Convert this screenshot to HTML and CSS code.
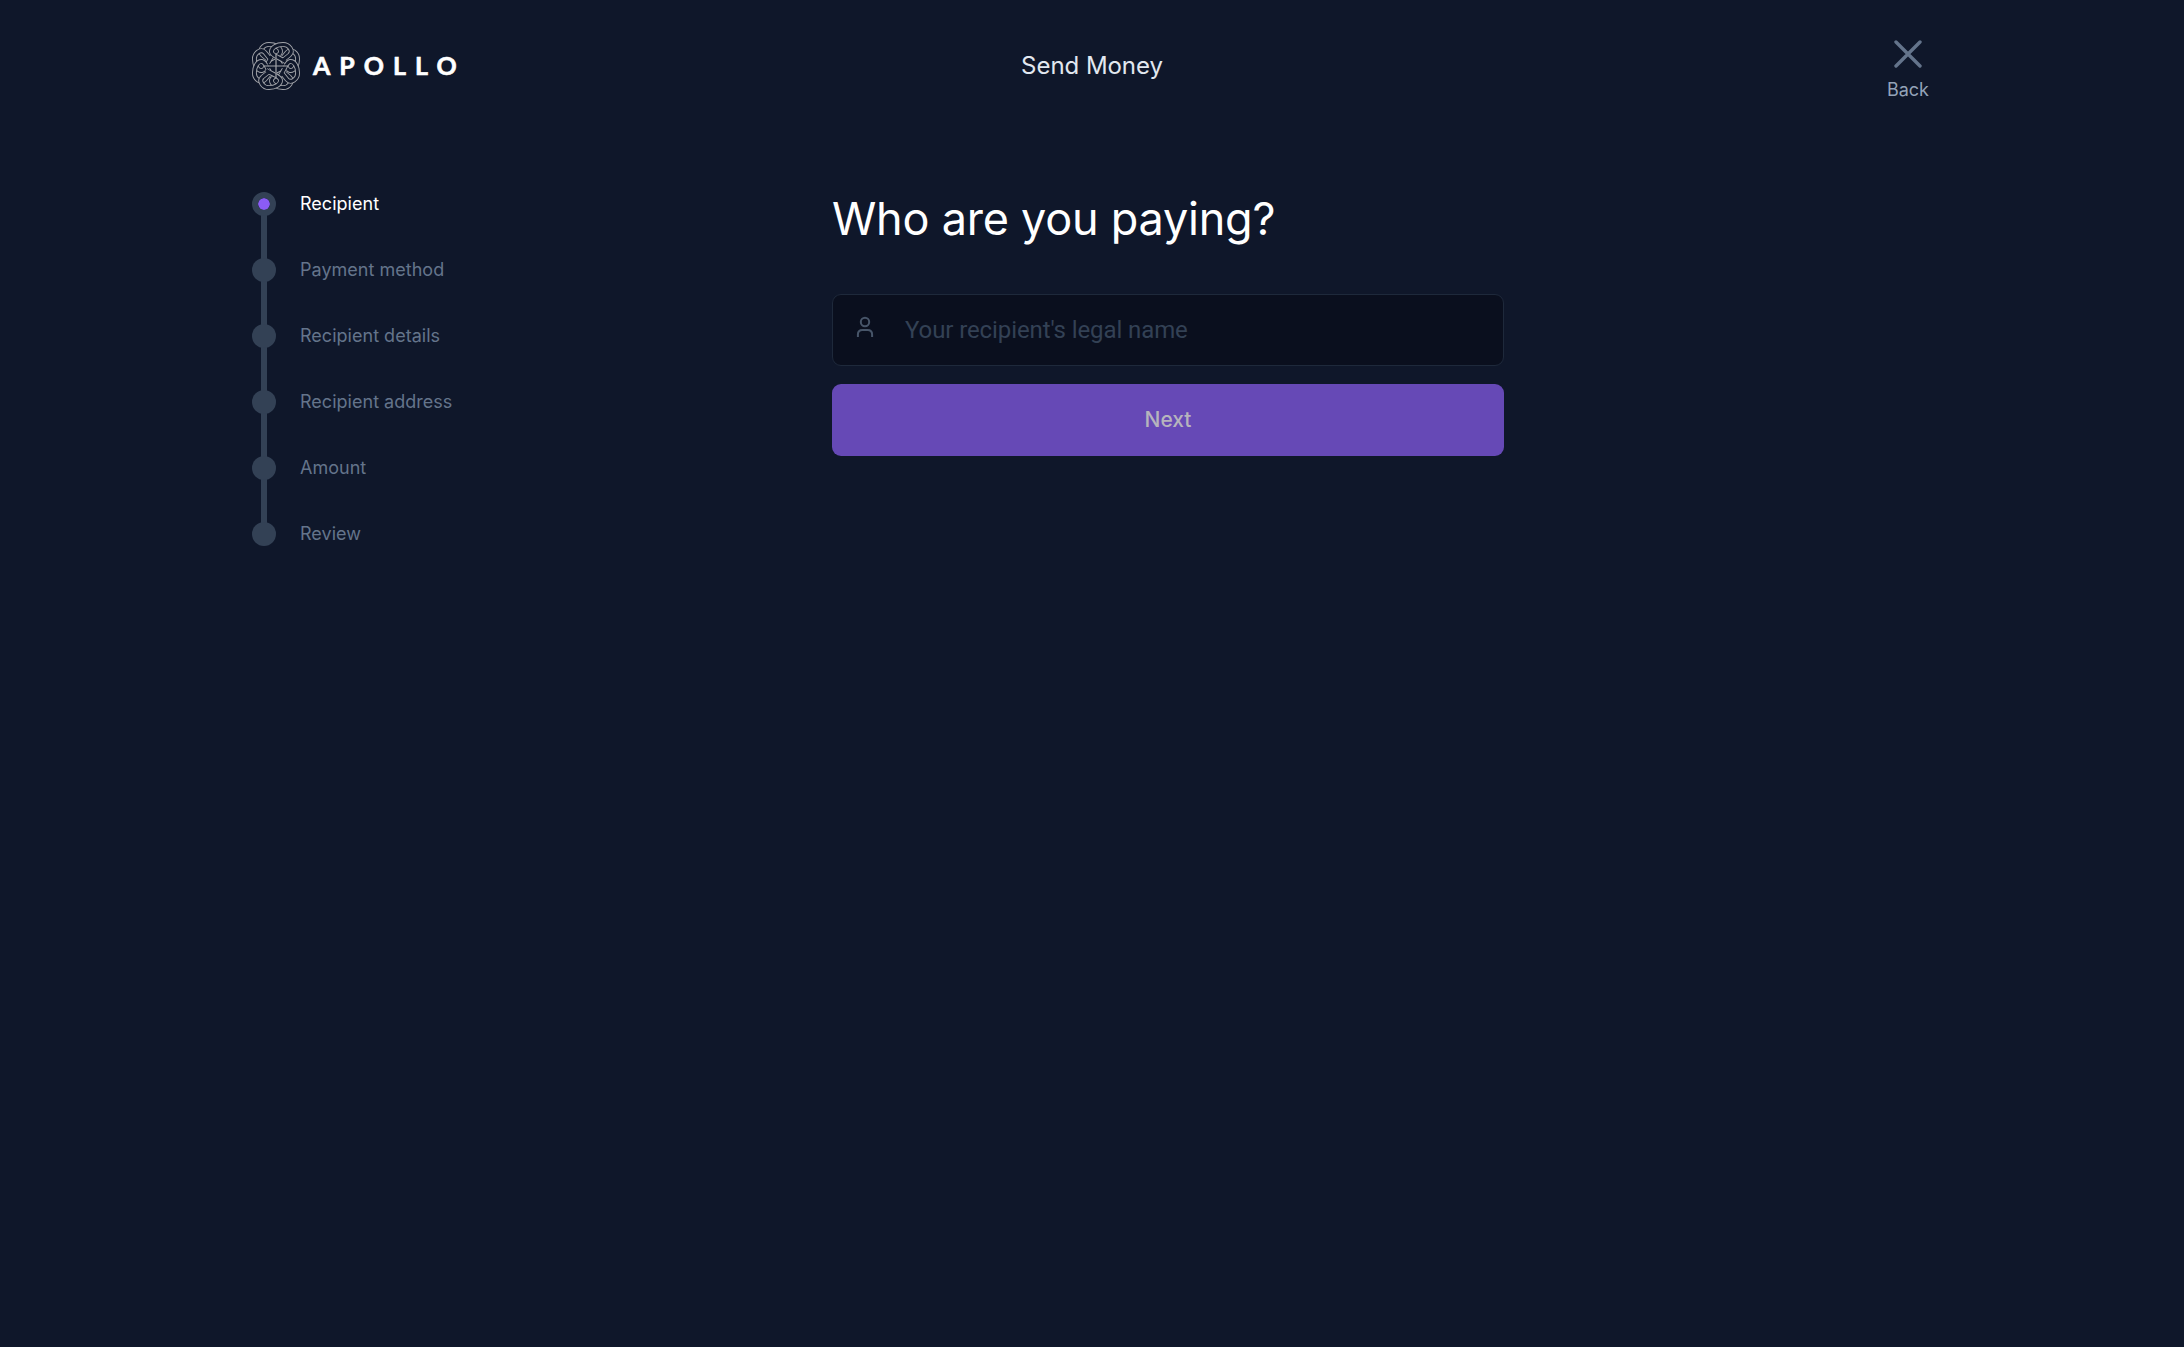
FILE: index.html
```html
<!DOCTYPE html>
<html lang="en">
<head>
<meta charset="utf-8">
<title>Send Money</title>
<link rel="stylesheet" href="styles.css">
</head>
<body>
<div class="page">
  <header class="header">
    <div class="brand">
      <svg class="brand-mark" viewBox="-24 -24 48 48">
        <defs>
          <path id="knot-line" d="M-6-5L-13.5-11C-18-15-13-21.6-7-21.6C-1-21.6 5-18.5 4.5-14C4-10-5-8-10-4"/>
          <g id="knot-strand">
            <use class="knot-edge" href="#knot-line"/>
            <use class="knot-fill" href="#knot-line"/>
          </g>
          <g id="knot-corner">
            <use href="#knot-strand"/>
            <use href="#knot-strand" transform="matrix(0 1 1 0 0 0)"/>
          </g>
        </defs>
        <use href="#knot-corner"/>
        <use href="#knot-corner" transform="rotate(90)"/>
        <use href="#knot-corner" transform="rotate(180)"/>
        <use href="#knot-corner" transform="rotate(270)"/>
        <path class="knot-center" d="M0-11Q0-1-9-2Q-6 0-9 2Q0 1 0 11Q0 1 9 2Q6 0 9-2Q0-1 0-11Z"/>
        <path class="knot-cross" d="M0-12V12M-12 0H12"/>
      </svg>
      <span class="brand-name">APOLLO</span>
    </div>
    <div class="title">Send Money</div>
    <a class="back">
      <svg class="back-icon" viewBox="0 0 28 28"><path d="M2 2L26 26M26 2L2 26"/></svg>
      <span>Back</span>
    </a>
  </header>
  <main class="main">
    <ol class="steps">
      <li class="step step-active"><i class="dot"></i><span class="step-label">Recipient</span></li>
      <li class="step"><i class="dot"></i><span class="step-label">Payment method</span></li>
      <li class="step"><i class="dot"></i><span class="step-label">Recipient details</span></li>
      <li class="step"><i class="dot"></i><span class="step-label">Recipient address</span></li>
      <li class="step"><i class="dot"></i><span class="step-label">Amount</span></li>
      <li class="step"><i class="dot"></i><span class="step-label">Review</span></li>
    </ol>
    <form class="form">
      <h1 class="heading">Who are you paying?</h1>
      <label class="field">
        <svg class="field-icon" viewBox="0 0 18 22"><circle cx="9" cy="6" r="4.2"/><path d="M1.9 21V18.5Q1.9 14 6.4 14H11.6Q16.1 14 16.1 18.5V21"/></svg>
        <input class="input" type="text" placeholder="Your recipient's legal name">
      </label>
      <button class="next" type="button">Next</button>
    </form>
  </main>
</div>
</body>
</html>
```
FILE: styles.css
```css
* { box-sizing: border-box; }
body {
  margin: 0;
  min-height: 100vh;
  background: #0f172a;
  color: #fff;
  font-family: Inter, "Liberation Sans", sans-serif;
}
.page { width: 1680px; margin: 0 auto; }
.header {
  display: grid;
  grid-template-columns: 1fr auto 1fr;
  align-items: center;
  height: 132px;
}
.brand { display: flex; align-items: center; gap: 12px; }
.brand-mark { width: 48px; height: 48px; fill: none; }
.knot-edge { stroke: #a3a5aa; stroke-width: 4.8; }
.knot-fill { stroke: #0f172a; stroke-width: 3; }
.knot-center { fill: #0f172a; }
.knot-cross { stroke: #a3a5aa; stroke-width: 1.2; }
.brand-name {
  padding: 0 0 2px 1px;
  font: 700 25px/46px Lato, sans-serif;
  letter-spacing: 9px;
  -webkit-text-stroke: 0.6px #fff;
}
.title { color: #e2e8f0; font-size: 24px; line-height: 36px; letter-spacing: -0.05px; }
.back {
  justify-self: end;
  display: flex;
  flex-direction: column;
  align-items: center;
  gap: 8px;
  padding: 10px 3px 0 0;
  color: #94a3b8;
  font-size: 18px;
  line-height: 27px;
}
.back-icon { width: 28px; height: 28px; fill: none; stroke: #64748b; stroke-width: 3.4; stroke-linecap: round; }
.main { display: flex; padding-top: 60px; }
.steps { width: 580px; margin: 0; padding: 0; list-style: none; }
.step {
  position: relative;
  display: flex;
  align-items: center;
  gap: 24px;
  height: 24px;
  margin-bottom: 42px;
  color: #64748b;
  font-size: 18px;
}
.step:not(:last-child)::before {
  content: "";
  position: absolute;
  left: 9px;
  top: 12px;
  width: 6px;
  height: 66px;
  background: #334155;
}
.step-active { color: #fff; }
.step-label { padding-bottom: 2px; letter-spacing: 0.02px; }
.dot { position: relative; width: 24px; height: 24px; border-radius: 50%; background: #334155; }
.step-active .dot { border: 6px solid #334155; background: #8b5cf6; background-clip: padding-box; }
.form { width: 672px; display: flex; flex-direction: column; }
.heading { margin: 0 0 48px; font-size: 45px; line-height: 54px; font-weight: 400; letter-spacing: -0.23px; }
.field {
  display: flex;
  align-items: center;
  height: 72px;
  padding-left: 23px;
  border: 1px solid #1e293b;
  border-radius: 9px;
  background: #0a0f1e;
}
.field-icon { width: 18px; height: 22px; margin-bottom: 7px; fill: none; stroke: #475569; stroke-width: 2; }
.input {
  flex: 1;
  height: 70px;
  padding: 0 0 0 31px;
  border: 0;
  outline: 0;
  background: none;
  color: #fff;
  font: 400 24px Roboto, sans-serif;
  letter-spacing: -0.1px;
}
.input::placeholder { color: #334155; }
.next {
  height: 72px;
  margin-top: 18px;
  padding-bottom: 3px;
  border: 0;
  border-radius: 9px;
  background: #6649b6;
  color: #b6b4bd;
  font: 500 21px Inter, sans-serif;
}
```
